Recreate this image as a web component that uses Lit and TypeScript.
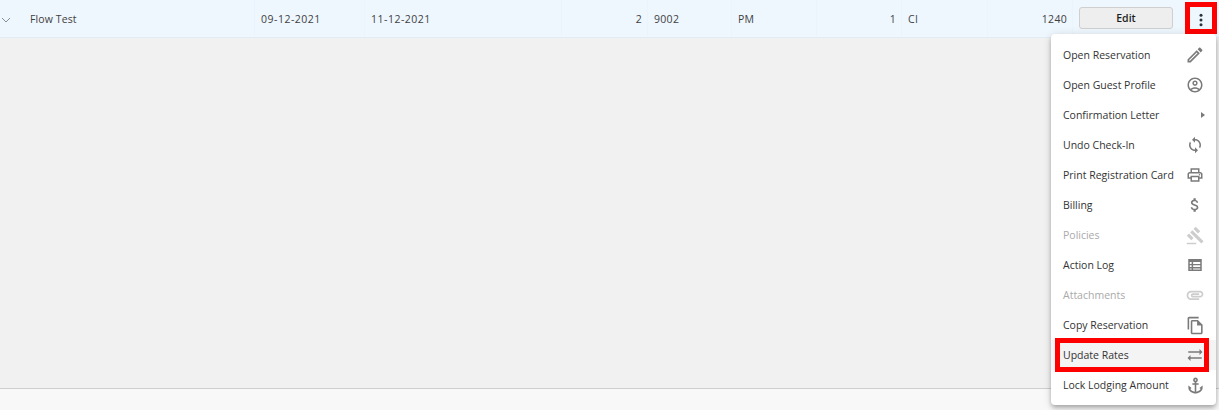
import { LitElement, html, css, svg } from "lit";
import { customElement } from "lit/decorators.js";

const icons: Record<string, any> = {
  edit: svg`<path d="M3 17.25V21h3.75L17.81 9.94l-3.75-3.75L3 17.25zM5.92 19H5v-.92l9.06-9.06.92.92L5.92 19zM20.71 5.63l-2.34-2.34c-.2-.2-.45-.29-.71-.29s-.51.1-.7.29l-1.83 1.83 3.75 3.75 1.83-1.83c.39-.39.39-1.02 0-1.41z"/>`,
  person: svg`<path d="M12 2C6.48 2 2 6.48 2 12s4.48 10 10 10 10-4.48 10-10S17.52 2 12 2zM7.35 18.5C8.66 17.56 10.26 17 12 17s3.34.56 4.65 1.5c-1.31.94-2.91 1.5-4.65 1.5s-3.34-.56-4.65-1.5zm10.79-1.38C16.45 15.8 14.32 15 12 15s-4.45.8-6.14 2.12C4.7 15.73 4 13.95 4 12c0-4.42 3.58-8 8-8s8 3.58 8 8c0 1.95-.7 3.73-1.86 5.12z"/><path d="M12 6c-1.93 0-3.5 1.57-3.5 3.5S10.07 13 12 13s3.5-1.57 3.5-3.5S13.93 6 12 6zm0 5c-.83 0-1.5-.67-1.5-1.5S11.17 8 12 8s1.5.67 1.5 1.5S12.83 11 12 11z"/>`,
  sync: svg`<path d="M12 4V1L8 5l4 4V6c3.31 0 6 2.69 6 6 0 1.01-.25 1.97-.7 2.8l1.46 1.46C19.54 15.03 20 13.57 20 12c0-4.42-3.58-8-8-8zm0 14c-3.31 0-6-2.69-6-6 0-1.01.25-1.97.7-2.8L5.24 7.74C4.46 8.97 4 10.43 4 12c0 4.42 3.58 8 8 8v3l4-4-4-4v3z"/>`,
  print: svg`<path d="M19 8h-1V3H6v5H5c-1.66 0-3 1.34-3 3v6h4v4h12v-4h4v-6c0-1.66-1.34-3-3-3zM8 5h8v3H8V5zm8 12v2H8v-4h8v2zm2-2v-2H6v2H4v-4c0-.55.45-1 1-1h14c.55 0 1 .45 1 1v4h-2z"/><circle cx="18" cy="11.5" r="1"/>`,
  money: svg`<path d="M11.8 10.9c-2.27-.59-3-1.2-3-2.15 0-1.09 1.01-1.85 2.7-1.85 1.78 0 2.44.85 2.5 2.1h2.21c-.07-1.72-1.12-3.3-3.21-3.81V3h-3v2.16c-1.94.42-3.5 1.68-3.5 3.61 0 2.31 1.91 3.46 4.7 4.13 2.5.6 3 1.48 3 2.41 0 .69-.49 1.79-2.7 1.79-2.06 0-2.87-.92-2.98-2.1h-2.2c.12 2.19 1.76 3.42 3.68 3.83V21h3v-2.15c1.95-.37 3.5-1.5 3.5-3.55 0-2.84-2.43-3.81-4.7-4.4z"/>`,
  gavel: svg`<path d="M1 21h12v2H1zM5.245 8.07l2.83-2.827 14.14 14.142-2.828 2.828zM12.317 1l5.657 5.656-2.83 2.83-5.654-5.66zM3.825 9.485l5.657 5.657-2.828 2.828-5.657-5.657z"/>`,
  log: svg`<path d="M3 4v16h18V4H3zm2 4h2.5v2.5H5V8zm0 4.25h2.5v2.5H5v-2.5zM5 18v-1.5h2.5V18H5zm14 0H9.5v-1.5H19V18zm0-3.25H9.5v-2.5H19v2.5zm0-4.25H9.5V8H19v2.5z"/>`,
  attach: svg`<path d="M2 12.5C2 9.46 4.46 7 7.5 7H18c2.21 0 4 1.79 4 4s-1.79 4-4 4H9.5C8.12 15 7 13.88 7 12.5S8.12 10 9.5 10H17v2H9.41c-.55 0-.55 1 0 1H18c1.1 0 2-.9 2-2s-.9-2-2-2H7.5C5.57 9 4 10.57 4 12.5S5.57 16 7.5 16H17v2H7.5C4.46 18 2 15.54 2 12.5z"/>`,
  copy: svg`<path d="M16 1H4c-1.1 0-2 .9-2 2v14h2V3h12V1zm-1 4H8c-1.1 0-1.99.9-1.99 2L6 21c0 1.1.89 2 1.99 2H19c1.1 0 2-.9 2-2V11l-6-6zM8 21V7h6v5h5v9H8z"/>`,
  swap: svg`<path d="M22 8l-4-4v3H3v2h15v3l4-4zM2 16l4 4v-3h15v-2H6v-3l-4 4z"/>`,
  anchor: svg`<path d="M17 15l1.55 1.55c-.96 1.69-3.33 3.04-5.55 3.37V11h3V9h-3V7.82C14.16 7.4 15 6.3 15 5c0-1.65-1.35-3-3-3S9 3.35 9 5c0 1.3.84 2.4 2 2.82V9H8v2h3v8.92c-2.22-.33-4.59-1.68-5.55-3.37L7 15l-4-3v3c0 3.88 4.92 7 9 7s9-3.12 9-7v-3l-4 3zM12 4c.55 0 1 .45 1 1s-.45 1-1 1-1-.45-1-1 .45-1 1-1z"/>`,
};

type Item = { label: string; icon?: string; size?: number; disabled?: boolean; active?: boolean; sub?: boolean };

const items: Item[] = [
  { label: "Open Reservation", icon: "edit", size: 20 },
  { label: "Open Guest Profile", icon: "person", size: 18 },
  { label: "Confirmation Letter", sub: true },
  { label: "Undo Check-In", icon: "sync", size: 18 },
  { label: "Print Registration Card", icon: "print", size: 18 },
  { label: "Billing", icon: "money", size: 18 },
  { label: "Policies", icon: "gavel", size: 19, disabled: true },
  { label: "Action Log", icon: "log", size: 18 },
  { label: "Attachments", icon: "attach", size: 20, disabled: true },
  { label: "Copy Reservation", icon: "copy", size: 19 },
  { label: "Update Rates", icon: "swap", size: 18, active: true },
  { label: "Lock Lodging Amount", icon: "anchor", size: 19 },
];

@customElement("app-root")
export class AppRoot extends LitElement {
  static styles = css`
    :host {
      display: block;
      position: relative;
      width: 1219px;
      height: 410px;
      overflow: hidden;
      background: #f1f1f1;
      font-family: "Open Sans", "Noto Sans", sans-serif;
      font-size: 10.5px;
      color: #3f3f3f;
    }
    .page {
      display: flex;
      flex-direction: column;
      height: 410px;
    }
    .row {
      display: grid;
      grid-template-columns: 255px 110px 197px 86px 84px 85px 85px 86px 85px 1fr;
      height: 38px;
      box-sizing: border-box;
      flex: none;
      background: #eef6fe;
      border-bottom: 1px solid #e3ebf3;
    }
    .cell {
      display: flex;
      align-items: center;
      padding: 0 6px;
      border-right: 1px solid #ebf3fc;
      min-width: 0;
      letter-spacing: 0.3px;
    }
    .num { justify-content: flex-end; padding-right: 5px; }
    .date { letter-spacing: 0.5px; }
    .first { padding-left: 0; letter-spacing: 0.1px; }
    .chev {
      width: 10px;
      height: 6px;
      margin: 3px 19px 0 1px;
      fill: none;
      stroke: #8a8f94;
      stroke-width: 1;
    }
    .last {
      border-right: 0;
      padding: 0 0 0 6px;
    }
    .edit {
      box-sizing: border-box;
      width: 94px;
      height: 22px;
      margin: -2px 0 0 0;
      padding: 0;
      border: 1px solid #cfcfcf;
      border-radius: 3px;
      background: #eeeeee;
      font: inherit;
      font-weight: 600;
      color: #1c1c1c;
      cursor: pointer;
    }
    .footer {
      margin-top: auto;
      height: 21px;
      flex: none;
      background: #f8f8f8;
      border-top: 1px solid #cfcfcf;
    }
    .kebab {
      position: absolute;
      left: 1185px;
      top: 2px;
      width: 32px;
      height: 32px;
      box-sizing: border-box;
      border: 5px solid #f00;
      display: flex;
      align-items: center;
      justify-content: center;
    }
    .kebab svg { width: 18px; height: 18px; margin-top: 3px; fill: #2a333c; }
    .menu {
      position: absolute;
      left: 1051px;
      top: 34px;
      width: 165px;
      height: 371px;
      box-sizing: border-box;
      padding: 6px 0 5px;
      background: #fff;
      border-radius: 4px;
      box-shadow: 0 2px 4px -1px rgba(0,0,0,.2), 0 4px 5px 0 rgba(0,0,0,.14), 0 1px 10px 0 rgba(0,0,0,.12);
      color: #333;
    }
    .item {
      display: flex;
      align-items: center;
      justify-content: space-between;
      height: 30px;
      padding: 0 12px;
      white-space: nowrap;
    }
    .ico { width: 18px; display: flex; justify-content: center; flex: none; }
    .ico svg { fill: #7a7a7a; flex: none; display: block; }
    .item.disabled { color: #aaa; }
    .item.disabled svg { fill: #cdcdcd; }
    .item.active { background: #f4f4f4; position: relative; }
    .item.active::after {
      content: "";
      position: absolute;
      left: 4px;
      right: 7px;
      top: -2px;
      bottom: -2px;
      border: 5px solid #f00;
    }
    .caret {
      width: 0;
      height: 0;
      border-left: 4px solid #7a7a7a;
      border-top: 3.5px solid transparent;
      border-bottom: 3.5px solid transparent;
      margin-right: -1px;
    }
  `;

  render() {
    return html`
      <div class="page">
        <div class="row">
          <div class="cell first">
            <svg class="chev" viewBox="0 0 10 6"><path d="M1 1l4 4 4-4" /></svg>
            Flow Test
          </div>
          <div class="cell date">09-12-2021</div>
          <div class="cell date">11-12-2021</div>
          <div class="cell num">2</div>
          <div class="cell">9002</div>
          <div class="cell">PM</div>
          <div class="cell num">1</div>
          <div class="cell">CI</div>
          <div class="cell num">1240</div>
          <div class="cell last"><button class="edit">Edit</button></div>
        </div>
        <div class="footer"></div>
      </div>
      <div class="kebab">
        <svg viewBox="0 0 24 24"><circle cx="12" cy="5.8" r="2" /><circle cx="12" cy="12" r="2" /><circle cx="12" cy="18.2" r="2" /></svg>
      </div>
      <div class="menu">
        ${items.map(
          (i) => html`<div class="item ${i.disabled ? "disabled" : ""} ${i.active ? "active" : ""}">
            <span>${i.label}</span>
            ${i.sub
              ? html`<span class="caret"></span>`
              : html`<span class="ico"><svg viewBox="0 0 24 24" style="width:${i.size}px;height:${i.size}px">${icons[i.icon!]}</svg></span>`}
          </div>`
        )}
      </div>
    `;
  }
}
